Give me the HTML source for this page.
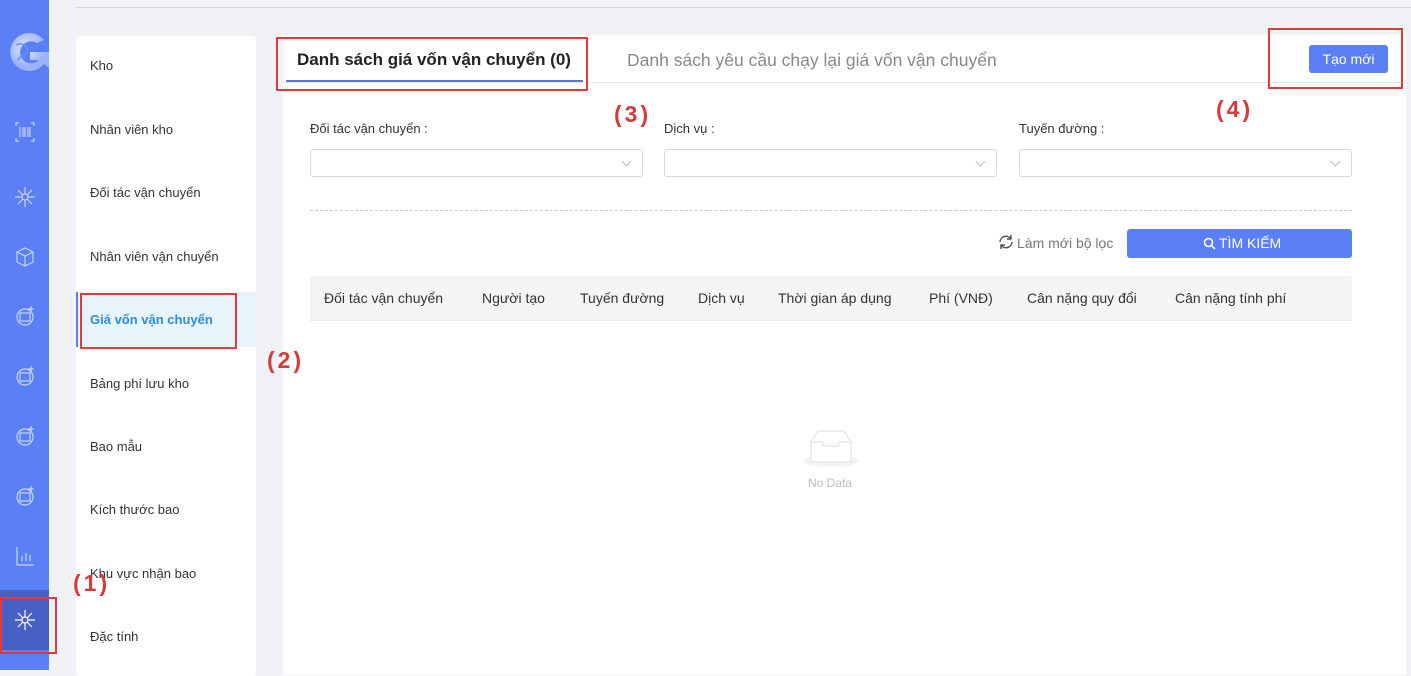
<!DOCTYPE html>
<html><head><meta charset="utf-8"><style>
*{box-sizing:border-box;margin:0;padding:0}
body{width:1411px;height:670px;overflow:hidden;background:#f0f2f5;font-family:"Liberation Sans",Arial,sans-serif;position:relative;color:#333}
.abs{position:absolute}
.sb{left:0;top:0;width:49px;height:670px;background:#5b7ff5}
.ic{position:absolute;left:14px;width:22px;height:22px}
.menu{left:76px;top:36px;width:180px;height:640px;background:#fff;border-radius:4px}
.mi{position:absolute;left:14px;font-size:13px;color:#333}
.main{left:283px;top:35px;width:1123px;height:640px;background:#fff}
.red{position:absolute;border:2.5px solid #e03a3a}
.lbl{position:absolute;color:#d43b3b;font-size:23px;font-weight:bold;font-family:"Liberation Sans",Arial,sans-serif;letter-spacing:3px}
.fl{position:absolute;font-size:13px;color:#333}
.sel{position:absolute;height:28px;width:333px;border:1px solid #d9d9d9;border-radius:3px;background:#fff}
.sel:after{content:"";position:absolute;right:12px;top:8px;width:6px;height:6px;border-right:1px solid #bbb;border-bottom:1px solid #bbb;transform:rotate(45deg)}
.th{position:absolute;top:290px;font-size:14px;color:#333}
</style></head><body>
<div class="abs sb"></div>
<svg class="abs" style="left:6px;top:30px" width="43" height="44" viewBox="0 0 43 44"><defs><radialGradient id="g" cx="40%" cy="40%"><stop offset="0" stop-color="#dfe7fd"/><stop offset="1" stop-color="#9ab2f8"/></radialGradient></defs><path d="M38 10A19 19 0 1 0 38 34L43 38V22H24v8h9A11 11 0 1 1 31 13z" fill="url(#g)"/><path d="M10 15q6-3 10 2t-2 8q-4 1-6 5" stroke="#6f8ff3" stroke-width="1.5" fill="none"/></svg>
<svg class="ic" style="top:121px" viewBox="0 0 22 22" fill="none" stroke="#c9d5fb" stroke-width="1.2"><path d="M2 5V2h3M17 2h3v3M20 17v3h-3M5 20H2v-3M6 6v10M9 6v10M11 6v10M14 6v10M16 6v10"/></svg>
<svg class="ic" style="top:186px" viewBox="0 0 22 22" fill="none" stroke="#c9d5fb" stroke-width="1.2"><circle cx="11" cy="11" r="3"/><path d="M11 1v7M11 14v7M1 11h7M14 11h7M4 4l5 5M13 13l5 5M18 4l-5 5M9 13l-5 5"/></svg>
<svg class="ic" style="top:246px" viewBox="0 0 22 22" fill="none" stroke="#c9d5fb" stroke-width="1.2"><path d="M11 2l8 4v10l-8 4-8-4V6zM3 6l8 4 8-4M11 10v10"/></svg>
<svg class="ic" style="top:305px" viewBox="0 0 22 22" fill="none" stroke="#c9d5fb" stroke-width="1.2"><circle cx="11" cy="12" r="8"/><rect x="6" y="8" width="10" height="8"/><path d="M17 1v6M14 4h6"/></svg>
<svg class="ic" style="top:365px" viewBox="0 0 22 22" fill="none" stroke="#c9d5fb" stroke-width="1.2"><circle cx="11" cy="12" r="8"/><rect x="6" y="8" width="10" height="8"/><path d="M17 1v6M14 4h6"/></svg>
<svg class="ic" style="top:425px" viewBox="0 0 22 22" fill="none" stroke="#c9d5fb" stroke-width="1.2"><circle cx="11" cy="12" r="8"/><rect x="6" y="8" width="10" height="8"/><path d="M17 1v6M14 4h6"/></svg>
<svg class="ic" style="top:485px" viewBox="0 0 22 22" fill="none" stroke="#c9d5fb" stroke-width="1.2"><circle cx="11" cy="12" r="8"/><rect x="6" y="8" width="10" height="8"/><path d="M17 1v6M14 4h6"/></svg>
<svg class="ic" style="top:545px" viewBox="0 0 22 22" fill="none" stroke="#c9d5fb" stroke-width="1.2"><path d="M3 2v18h17M8 16v-5M12 16v-8M16 16v-6"/></svg>
<div class="abs" style="left:0;top:590px;width:49px;height:60px;background:#4860c4"></div>
<svg class="ic" style="top:609px" viewBox="0 0 22 22" fill="none" stroke="#fff" stroke-width="1.2"><circle cx="11" cy="11" r="3"/><path d="M11 1v7M11 14v7M1 11h7M14 11h7M4 4l5 5M13 13l5 5M18 4l-5 5M9 13l-5 5"/></svg>
<div class="red" style="left:0;top:597px;width:57px;height:57px"></div>

<div class="abs" style="left:76px;top:7px;width:1335px;height:1px;background:#d8d8d8"></div>

<div class="abs menu">
<div class="abs" style="left:0;top:256px;width:180px;height:55px;background:#e8f4fb;border-left:2px solid #5b7ff5"></div>
<div class="mi" style="top:22px">Kho</div>
<div class="mi" style="top:86px">Nhân viên kho</div>
<div class="mi" style="top:149px">Đối tác vận chuyển</div>
<div class="mi" style="top:213px">Nhân viên vận chuyển</div>
<div class="mi" style="top:276px;color:#2a8ee0;font-weight:bold">Giá vốn vận chuyển</div>
<div class="mi" style="top:340px">Bảng phí lưu kho</div>
<div class="mi" style="top:403px">Bao mẫu</div>
<div class="mi" style="top:466px">Kích thước bao</div>
<div class="mi" style="top:530px">Khu vực nhận bao</div>
<div class="mi" style="top:593px">Đặc tính</div>
</div>
<div class="red" style="left:80px;top:293px;width:157px;height:56px"></div>

<div class="abs main"></div>
<div class="abs" style="left:283px;top:82px;width:1123px;height:1px;background:#e8e8e8"></div>
<div class="abs" style="left:297px;top:50px;font-size:17px;font-weight:bold;color:#222">Danh sách giá vốn vận chuyển (0)</div>
<div class="abs" style="left:286px;top:80px;width:297px;height:2px;background:#5a78c8"></div>
<div class="abs" style="left:627px;top:50px;font-size:17.5px;color:#888">Danh sách yêu cầu chạy lại giá vốn vận chuyển</div>
<div class="red" style="left:276px;top:37px;width:312px;height:54px"></div>
<div class="abs" style="left:1309px;top:45px;width:79px;height:28px;background:#5b7ff5;border-radius:3px;color:#fff;font-size:14px;text-align:center;line-height:28px">Tạo mới</div>
<div class="red" style="left:1268px;top:28px;width:135px;height:61px"></div>

<div class="fl" style="left:310px;top:121px">Đối tác vận chuyển :</div>
<div class="fl" style="left:664px;top:121px">Dịch vụ :</div>
<div class="fl" style="left:1019px;top:121px">Tuyến đường :</div>
<div class="sel" style="left:310px;top:149px"></div>
<div class="sel" style="left:664px;top:149px"></div>
<div class="sel" style="left:1019px;top:149px"></div>
<div class="abs" style="left:310px;top:210px;width:1042px;border-top:1px dashed #ccc"></div>

<svg class="abs" style="left:998px;top:234px" width="16" height="16" viewBox="0 0 16 16" fill="none" stroke="#555" stroke-width="1.5"><path d="M2 8a6 6 0 0 1 11-3M14 8a6 6 0 0 1-11 3M13 1v4h-4M3 15v-4h4"/></svg>
<div class="abs" style="left:1017px;top:235px;font-size:14px;color:#777">Làm mới bộ lọc</div>
<div class="abs" style="left:1127px;top:229px;width:225px;height:29px;background:#5b7ff5;border-radius:3px;color:#fff;font-size:14px;line-height:29px"><svg class="abs" style="left:76px;top:8px" width="13" height="13" viewBox="0 0 13 13" fill="none" stroke="#fff" stroke-width="1.5"><circle cx="5.5" cy="5.5" r="4"/><path d="M8.5 8.5l3.5 3.5"/></svg><span class="abs" style="left:92px;top:0">TÌM KIẾM</span></div>

<div class="abs" style="left:310px;top:276px;width:1042px;height:45px;background:#f5f5f5;border-radius:3px 3px 0 0;border-bottom:1px solid #ececec"></div>
<div class="th" style="left:324px">Đối tác vận chuyển</div>
<div class="th" style="left:482px">Người tạo</div>
<div class="th" style="left:580px">Tuyến đường</div>
<div class="th" style="left:698px">Dịch vụ</div>
<div class="th" style="left:778px">Thời gian áp dụng</div>
<div class="th" style="left:929px">Phí (VNĐ)</div>
<div class="th" style="left:1027px">Cân nặng quy đổi</div>
<div class="th" style="left:1175px">Cân nặng tính phí</div>

<div class="abs" style="left:803px;top:455px;width:56px;height:12px;border-radius:50%;background:#f3f3f3"></div>
<svg class="abs" style="left:810px;top:430px" width="42" height="34" viewBox="0 0 42 34" fill="#fff" stroke="#ddd" stroke-width="1"><path d="M1 12L8 1h26l7 11v20H1z"/><path d="M1 12h12v4h16v-4h12" fill="#fafafa"/></svg>
<div class="abs" style="left:808px;top:476px;font-size:12px;color:#bbb">No Data</div>

<div class="lbl" style="left:73px;top:570px">(1)</div>
<div class="lbl" style="left:267px;top:347px">(2)</div>
<div class="lbl" style="left:614px;top:101px">(3)</div>
<div class="lbl" style="left:1216px;top:96px">(4)</div>
</body></html>
